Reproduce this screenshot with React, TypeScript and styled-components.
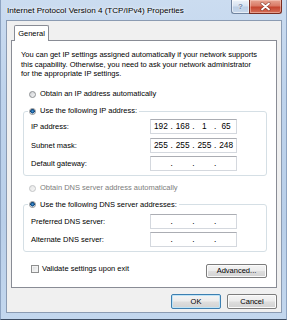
import React from "react";
import styled, { createGlobalStyle } from "styled-components";

const Global = createGlobalStyle`
  html, body { margin: 0; padding: 0; width: 287px; height: 320px; overflow: hidden; }
  body { font-family: "Liberation Sans", Arial, sans-serif; }
  * { box-sizing: border-box; }
`;

const Window = styled.div`
  width: 287px;
  height: 320px;
  display: flex;
  flex-direction: column;
  padding: 0 4px 7px 5px;
  background: linear-gradient(180deg, #cbdcf0 0%, #bed3ec 30%, #b9cfe9 70%, #c3d7ee 100%);
  border-bottom: 1px solid #3d4d63;
  border-left: 1px solid #8ea4c2;
  border-right: 1px solid #8ea4c2;
`;

const TitleBar = styled.div`
  height: 20px;
  flex: none;
  display: flex;
  align-items: flex-start;
`;

const Title = styled.div`
  align-self: center;
  padding-left: 1px;
  font-size: 8.1px;
  color: #000;
  white-space: nowrap;
  text-shadow: 0 0 5px rgba(255, 255, 255, 0.95), 0 0 2px rgba(255, 255, 255, 0.9);
`;

const CaptionButtons = styled.div`
  margin-left: auto;
  display: flex;
`;

const HelpButton = styled.div`
  width: 18px;
  height: 14px;
  border: 1px solid #71849f;
  border-top: none;
  border-right: none;
  border-radius: 0 0 0 3px;
  background: linear-gradient(180deg, #eef3f9 0%, #d6e2f0 45%, #bccee4 55%, #c9d9ec 100%);
  box-shadow: inset 0 0 0 1px rgba(255, 255, 255, 0.55);
  display: flex;
  align-items: center;
  justify-content: center;
  font-size: 8px;
  font-weight: bold;
  color: #7186a4;
  text-shadow: 0 0 2px #ffffff;
`;

const CloseButton = styled.div`
  width: 33px;
  height: 14px;
  border: 1px solid #7a2c20;
  border-top: none;
  border-radius: 0 0 3px 0;
  background: linear-gradient(180deg, #e7a593 0%, #d97a66 45%, #c5452f 55%, #d5705a 100%);
  box-shadow: inset 0 0 0 1px rgba(255, 220, 210, 0.45);
  display: flex;
  align-items: center;
  justify-content: center;
`;

const Client = styled.div`
  flex: 1;
  display: flex;
  flex-direction: column;
  background: #f0f0f0;
  border: 1px solid #8b9bb2;
  padding: 4px 4px 3px 4px;
`;

const TabStrip = styled.div`
  height: 15px;
  flex: none;
  display: flex;
  padding-left: 3px;
`;

const Tab = styled.div`
  position: relative;
  z-index: 1;
  width: 35px;
  height: 16px;
  margin-bottom: -1px;
  background: #ffffff;
  border: 1px solid #898c95;
  border-bottom: none;
  border-radius: 2px 2px 0 0;
  font-size: 7.5px;
  color: #000;
  display: flex;
  align-items: center;
  justify-content: center;
  padding-bottom: 1px;
`;

const Panel = styled.div`
  height: 248px;
  flex: none;
  background: #ffffff;
  border: 1px solid #898c95;
  padding: 0 9px;
  display: flex;
  flex-direction: column;
`;

const Intro = styled.p`
  margin: 9px 0 0 0;
  font-size: 7.5px;
  line-height: 9.5px;
  color: #000;
  white-space: nowrap;
`;

const OptionRow = styled.div<{ $top: number }>`
  height: 10px;
  margin-top: ${(p) => p.$top}px;
  padding-left: 8px;
  display: flex;
  align-items: center;
  gap: 4px;
`;

const RadioCircle = styled.span<{ $checked?: boolean; $disabled?: boolean }>`
  width: 7px;
  height: 7px;
  flex: none;
  border-radius: 50%;
  border: 1px solid ${(p) => (p.$disabled ? "#c2c4c6" : "#8c8f92")};
  background: ${(p) =>
    p.$checked
      ? "radial-gradient(circle at 50% 45%, #4fa2de 0, #1b5f9e 1.3px, #0e3f70 2.1px, #dfe9f3 2.4px, #f4f7fa 3.5px)"
      : p.$disabled
      ? "linear-gradient(135deg, #e6e6e6, #f7f7f7)"
      : "linear-gradient(135deg, #cfd1d4, #f4f5f6)"};
`;

const OptionText = styled.span<{ $disabled?: boolean }>`
  font-size: 7.5px;
  line-height: 10px;
  white-space: nowrap;
  color: ${(p) => (p.$disabled ? "#7d7d7d" : "#000")};
`;

const Group = styled.fieldset<{ $top: number; $padTop: number }>`
  margin: ${(p) => p.$top}px 0 0 2px;
  padding: ${(p) => p.$padTop}px 29px 4px 7px;
  border: 1px solid #d5dfe5;
  border-radius: 3px;
  min-width: 0;
`;

const Legend = styled.legend`
  margin-left: -3px;
  padding: 0 2px 0 1px;
  height: 10px;
  display: flex;
  align-items: center;
  gap: 4px;
`;

const FieldGrid = styled.div`
  display: grid;
  grid-template-columns: 1fr 87px;
  row-gap: 3.5px;
  align-items: center;
`;

const FieldLabel = styled.span`
  font-size: 7.5px;
  color: #000;
  white-space: nowrap;
`;

const IPBox = styled.div`
  height: 15px;
  border: 1px solid #d4d8de;
  border-top-color: #abadb3;
  background: #ffffff;
  display: grid;
  grid-template-columns: 1fr 2px 1fr 2px 1fr 2px 1fr;
  align-items: center;
  font-size: 8.3px;
  color: #000;
`;

const Octet = styled.span`
  text-align: center;
  line-height: 13px;
`;

const Dot = styled.span`
  justify-self: center;
  line-height: 13px;
  width: 2px;
  display: flex;
  justify-content: center;
`;

const BottomRow = styled.div`
  margin-top: 11.5px;
  display: flex;
  align-items: flex-start;
  justify-content: space-between;
`;

const CheckLabel = styled.div`
  height: 10px;
  padding-left: 10px;
  display: flex;
  align-items: center;
  gap: 3px;
`;

const CheckBox = styled.span`
  width: 8px;
  height: 8px;
  border: 1px solid #8e8f8f;
  background: linear-gradient(135deg, #d4d6d8 0%, #eceded 55%, #fbfbfb 100%);
  box-shadow: inset 0 0 0 1px #f2f2f2;
`;

const Button = styled.button<{ $w: number; $h: number; $default?: boolean }>`
  width: ${(p) => p.$w}px;
  height: ${(p) => p.$h}px;
  padding: 0;
  margin: 0;
  border: 1px solid ${(p) => (p.$default ? "#3c7fb1" : "#7c7c7c")};
  border-radius: 2px;
  background: linear-gradient(180deg, #f4f4f4 0%, #ececec 48%, #dedede 52%, #d2d2d2 100%);
  box-shadow: inset 0 0 0 1px ${(p) => (p.$default ? "#bfe4f7" : "#fbfbfb")};
  font-family: "Liberation Sans", Arial, sans-serif;
  font-size: 7.5px;
  color: #000;
  display: flex;
  align-items: center;
  justify-content: center;
`;

const Footer = styled.div`
  margin-top: 6px;
  display: flex;
  justify-content: flex-end;
  gap: 6px;
`;

function IPField({ value }: { value?: string[] }) {
  const v = value ?? ["", "", "", ""];
  return (
    <IPBox>
      <Octet>{v[0]}</Octet>
      <Dot>.</Dot>
      <Octet>{v[1]}</Octet>
      <Dot>.</Dot>
      <Octet>{v[2]}</Octet>
      <Dot>.</Dot>
      <Octet>{v[3]}</Octet>
    </IPBox>
  );
}

export default function App() {
  return (
    <>
      <Global />
      <Window>
        <TitleBar>
          <Title>Internet Protocol Version 4 (TCP/IPv4) Properties</Title>
          <CaptionButtons>
            <HelpButton>?</HelpButton>
            <CloseButton>
              <svg width="11" height="9" viewBox="0 0 11 9">
                <path d="M2 1.5 L9 7.5 M9 1.5 L2 7.5" stroke="#5a1d14" strokeWidth="3" strokeLinecap="round" opacity="0.55" />
                <path d="M2 1.5 L9 7.5 M9 1.5 L2 7.5" stroke="#ffffff" strokeWidth="1.8" strokeLinecap="round" />
              </svg>
            </CloseButton>
          </CaptionButtons>
        </TitleBar>
        <Client>
          <TabStrip>
            <Tab>General</Tab>
          </TabStrip>
          <Panel>
            <Intro>
              You can get IP settings assigned automatically if your network supports
              <br />
              this capability. Otherwise, you need to ask your network administrator
              <br />
              for the appropriate IP settings.
            </Intro>
            <OptionRow $top={10.5}>
              <RadioCircle />
              <OptionText>Obtain an IP address automatically</OptionText>
            </OptionRow>
            <Group $top={7} $padTop={3}>
              <Legend>
                <RadioCircle $checked />
                <OptionText>Use the following IP address:</OptionText>
              </Legend>
              <FieldGrid>
                <FieldLabel>IP address:</FieldLabel>
                <IPField value={["192", "168", "1", "65"]} />
                <FieldLabel>Subnet mask:</FieldLabel>
                <IPField value={["255", "255", "255", "248"]} />
                <FieldLabel>Default gateway:</FieldLabel>
                <IPField />
              </FieldGrid>
            </Group>
            <OptionRow $top={7}>
              <RadioCircle $disabled />
              <OptionText $disabled>Obtain DNS server address automatically</OptionText>
            </OptionRow>
            <Group $top={6.5} $padTop={4}>
              <Legend>
                <RadioCircle $checked />
                <OptionText>Use the following DNS server addresses:</OptionText>
              </Legend>
              <FieldGrid>
                <FieldLabel>Preferred DNS server:</FieldLabel>
                <IPField />
                <FieldLabel>Alternate DNS server:</FieldLabel>
                <IPField />
              </FieldGrid>
            </Group>
            <BottomRow>
              <CheckLabel>
                <CheckBox />
                <OptionText>Validate settings upon exit</OptionText>
              </CheckLabel>
              <Button $w={61} $h={14}>Advanced...</Button>
            </BottomRow>
          </Panel>
          <Footer>
            <Button $w={50} $h={15} $default>OK</Button>
            <Button $w={50} $h={15}>Cancel</Button>
          </Footer>
        </Client>
      </Window>
    </>
  );
}
